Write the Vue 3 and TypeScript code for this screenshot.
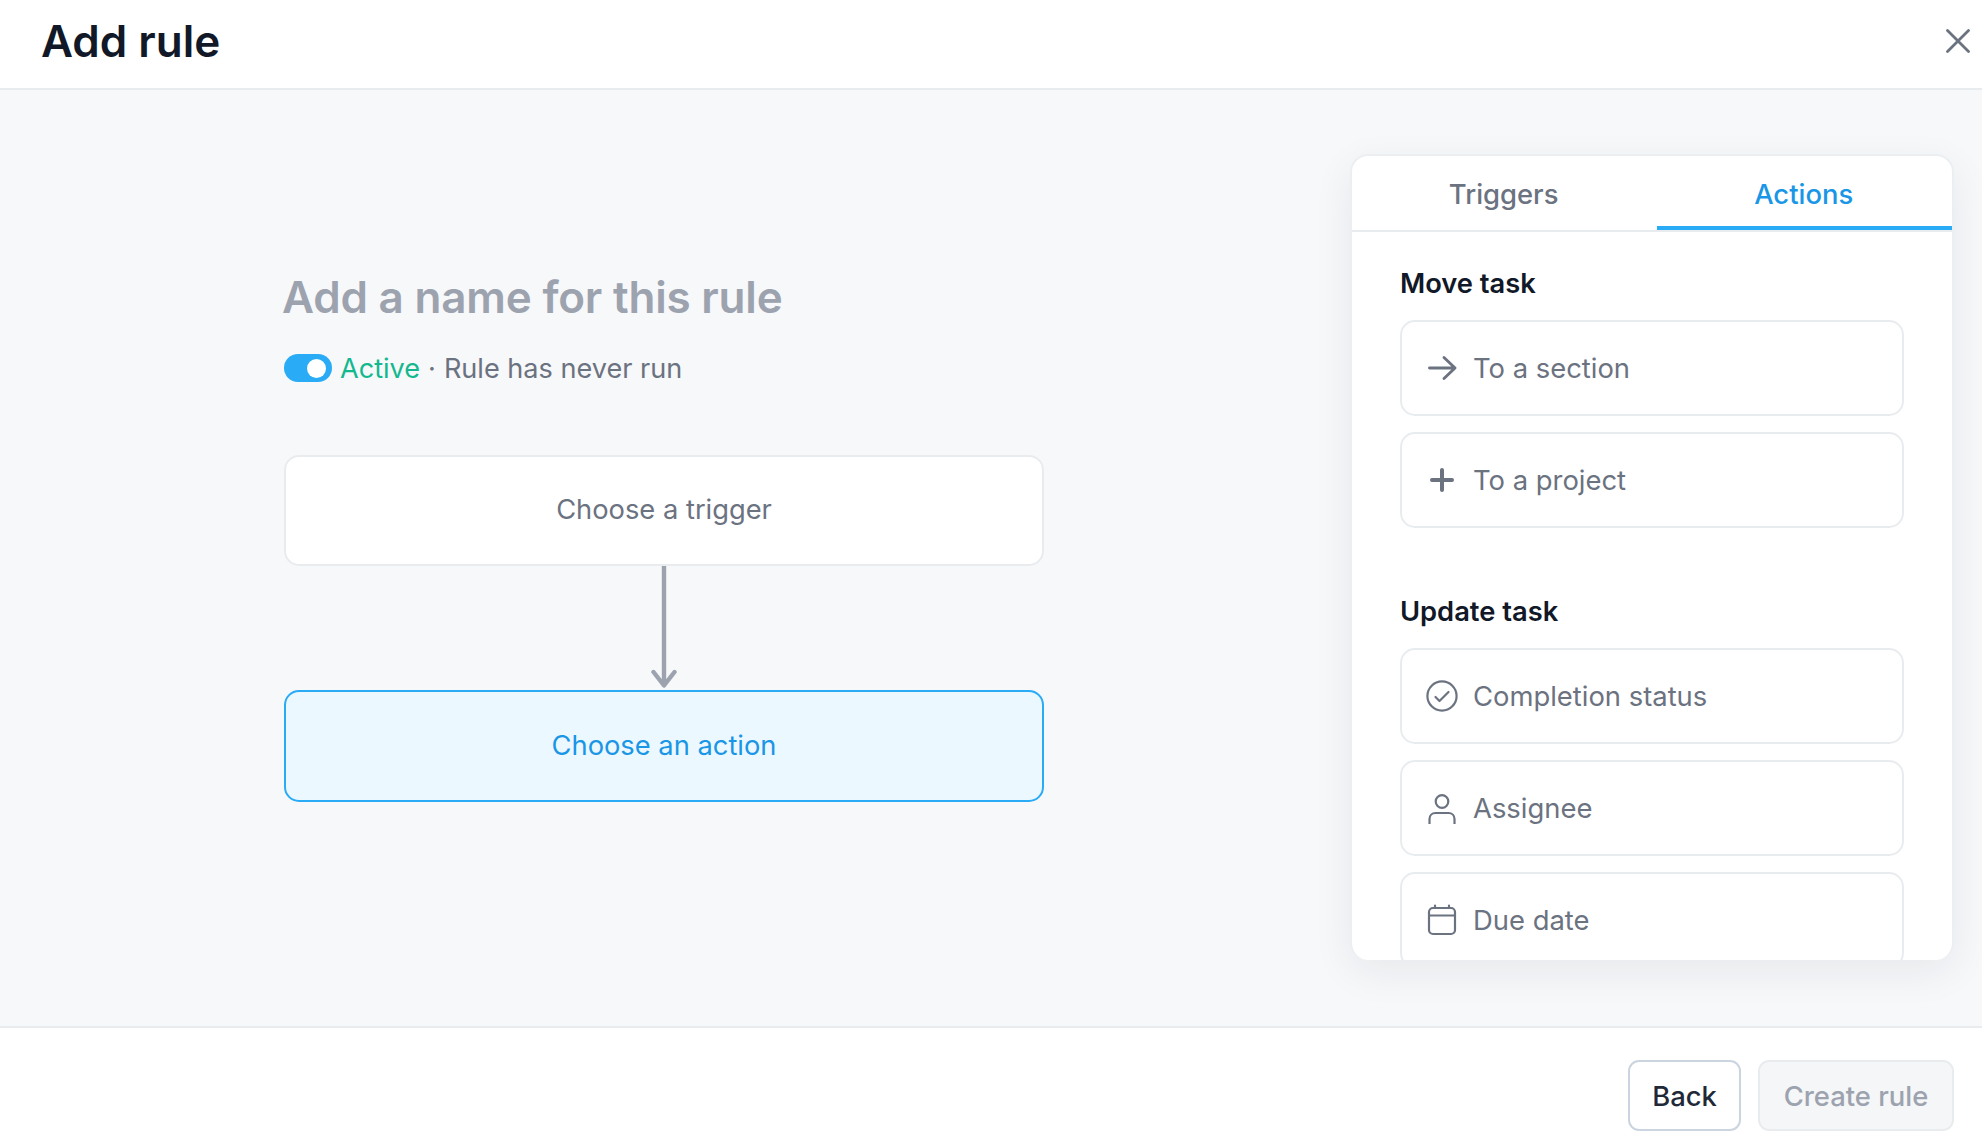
<script setup lang="ts">
const moveItems = [
  { label: 'To a section', icon: 'arrow' },
  { label: 'To a project', icon: 'plus' },
]
const updateItems = [
  { label: 'Completion status', icon: 'check' },
  { label: 'Assignee', icon: 'user' },
  { label: 'Due date', icon: 'calendar' },
]
const groups = [
  { title: 'Move task', items: moveItems },
  { title: 'Update task', items: updateItems },
]
</script>

<template>
  <div class="page">
    <header class="topbar">
      <h1 class="title">Add rule</h1>
      <button class="close" type="button" aria-label="Close">
        <svg width="24" height="24" viewBox="0 0 24 24" fill="none" stroke="#6b7280" stroke-width="2.8" stroke-linecap="round">
          <path d="M1.5 1.5 22.5 22.5M22.5 1.5 1.5 22.5" />
        </svg>
      </button>
    </header>

    <main class="body">
      <section class="canvas">
        <h2 class="rule-name">Add a name for this rule</h2>
        <div class="status">
          <span class="toggle"><span class="knob"></span></span>
          <span class="active">Active</span>
          <span class="dot">·</span>
          <span class="never">Rule has never run</span>
        </div>
        <div class="flow-card trigger">Choose a trigger</div>
        <svg class="connector" width="32" height="124" viewBox="0 0 32 124" fill="none" stroke="#9ca3af" stroke-width="4.4" stroke-linecap="round" stroke-linejoin="round">
          <path d="M16 0V119M5.500 106 16 119.500 26.500 106" />
        </svg>
        <div class="flow-card action">Choose an action</div>
      </section>

      <aside class="panel">
        <div class="tabs">
          <div class="tab">Triggers</div>
          <div class="tab selected">Actions</div>
        </div>
        <div class="panel-scroll">
          <div v-for="group in groups" :key="group.title" class="group">
            <h3 class="group-title">{{ group.title }}</h3>
            <div class="group-items">
              <div v-for="item in group.items" :key="item.label" class="item">
                <span class="item-icon">
                  <svg v-if="item.icon === 'arrow'" width="32" height="32" viewBox="0 0 32 32" fill="none" stroke="#6b7280" stroke-width="2.9" stroke-linecap="round" stroke-linejoin="round">
                    <path d="M3.500 16H29M18 5.500 29 16 18 26.500" />
                  </svg>
                  <svg v-else-if="item.icon === 'plus'" width="32" height="32" viewBox="0 0 32 32" fill="none" stroke="#6b7280" stroke-width="4" stroke-linecap="round">
                    <path d="M16 6V26M6 16H26" />
                  </svg>
                  <svg v-else-if="item.icon === 'check'" width="32" height="32" viewBox="0 0 32 32" fill="none" stroke="#6b7280" stroke-width="2.2" stroke-linecap="round" stroke-linejoin="round">
                    <circle cx="16" cy="16" r="14.600" />
                    <path d="M9.500 17 13.500 21 22.500 12" />
                  </svg>
                  <svg v-else-if="item.icon === 'user'" width="32" height="32" viewBox="0 0 32 32" fill="none" stroke="#6b7280" stroke-width="2.2" stroke-linejoin="round">
                    <circle cx="16" cy="9.500" r="6.300" />
                    <path d="M3.500 32V27C3.500 23.500 6 21 9.500 21H22.500C26 21 28.500 23.500 28.500 27V32" />
                  </svg>
                  <svg v-else width="32" height="32" viewBox="0 0 32 32" fill="none" stroke="#6b7280" stroke-width="2.2" stroke-linecap="round" stroke-linejoin="round">
                    <rect x="3" y="4" width="26" height="26" rx="4" />
                    <path d="M3 11.500H29M9 1.500V4M23 1.500V4" />
                  </svg>
                </span>
                <span class="item-label">{{ item.label }}</span>
              </div>
            </div>
          </div>
        </div>
      </aside>
    </main>

    <footer class="footer">
      <button class="btn back" type="button">Back</button>
      <button class="btn create" type="button" disabled>Create rule</button>
    </footer>
  </div>
</template>

<style>
html, body { margin: 0; background: #fff; }
</style>

<style scoped>
.page {
  width: 1982px;
  height: 1148px;
  display: flex;
  flex-direction: column;
  background: #fff;
  font-family: Inter, "Liberation Sans", sans-serif;
  overflow: hidden;
}
.topbar {
  height: 90px;
  box-sizing: border-box;
  flex: none;
  display: flex;
  align-items: center;
  justify-content: space-between;
  padding: 0 12px 6px 41px;
  border-bottom: 2px solid #e9ecef;
}
.title {
  margin: 0;
  font-size: 44px;
  font-weight: 600;
  color: #111827;
}
.close {
  width: 24px;
  height: 24px;
  padding: 0;
  border: 0;
  background: none;
  display: flex;
}
.body {
  flex: 1;
  min-height: 0;
  display: flex;
  justify-content: space-between;
  align-items: flex-start;
  background: #f7f8fa;
  padding: 64px 28px 0 284px;
}
.canvas {
  width: 760px;
  display: flex;
  flex-direction: column;
  padding-top: 112px;
}
.rule-name {
  margin: 0 0 0 -2px;
  height: 62px;
  line-height: 62px;
  font-size: 44px;
  font-weight: 600;
  letter-spacing: -0.2px;
  color: #9ca3af;
}
.status {
  margin-top: 23px;
  height: 34px;
  display: flex;
  align-items: center;
  font-size: 27.1px;
  color: #6b7280;
}
.toggle {
  width: 48px;
  height: 28px;
  border-radius: 14px;
  background: #29abf6;
  display: flex;
  align-items: center;
  justify-content: flex-end;
  padding-right: 6px;
  box-sizing: border-box;
  margin-right: 8px;
}
.knob {
  width: 19px;
  height: 19px;
  border-radius: 50%;
  background: #fff;
}
.active { color: #14b88f; }
.dot { margin: 0 8px; }
.flow-card {
  height: 111px;
  box-sizing: border-box;
  display: flex;
  align-items: center;
  justify-content: center;
  border-radius: 15px;
  font-size: 27.3px;
  padding-bottom: 2px;
}
.trigger {
  margin-top: 70px;
  background: #fff;
  border: 2px solid #e9ecef;
  color: #6b7280;
}
.connector {
  align-self: center;
  display: block;
  flex: none;
}
.action {
  height: 112px;
  background: #ecf8ff;
  border: 2px solid #29abf6;
  color: #1a96e6;
}
.panel {
  width: 604px;
  height: 806px;
  box-sizing: border-box;
  flex: none;
  background: #fff;
  border: 2px solid #eceff2;
  border-bottom: 0;
  border-radius: 18px;
  box-shadow: 0 12px 40px rgba(17, 24, 39, 0.07);
  overflow: hidden;
  display: flex;
  flex-direction: column;
}
.tabs {
  display: flex;
  height: 74px;
  flex: none;
  border-bottom: 2px solid #e9ecef;
}
.tab {
  flex: 1 1 auto;
  display: flex;
  align-items: center;
  justify-content: center;
  box-sizing: border-box;
  font-size: 27.4px;
  font-weight: 500;
  color: #6b7280;
  padding: 5px 2px 0 0;
  border-bottom: 4px solid transparent;
}
.tab.selected {
  color: #1a96e6;
  border-bottom-color: #29abf6;
}
.panel-scroll {
  flex: 1;
  min-height: 0;
  overflow: hidden;
  padding: 35px 48px 0;
}
.group + .group {
  margin-top: 67px;
}
.group-title {
  margin: 0 0 19px;
  height: 34px;
  line-height: 34px;
  font-size: 27.3px;
  font-weight: 600;
  color: #111827;
}
.group-items {
  display: flex;
  flex-direction: column;
  gap: 16px;
}
.item {
  height: 96px;
  flex: none;
  box-sizing: border-box;
  border: 2px solid #e9ecef;
  border-radius: 15px;
  display: flex;
  align-items: center;
  padding-left: 24px;
  background: #fff;
}
.item-icon {
  width: 32px;
  height: 32px;
  display: flex;
  flex: none;
  margin-right: 15px;
}
.item-label {
  font-size: 27.4px;
  color: #6b7280;
}
.footer {
  flex: none;
  height: 122px;
  box-sizing: border-box;
  border-top: 2px solid #e9ecef;
  display: flex;
  justify-content: flex-end;
  gap: 17px;
  padding: 32px 28px 0 0;
}
.btn {
  height: 71px;
  box-sizing: border-box;
  border-radius: 11px;
  font-family: inherit;
  font-size: 27.4px;
  font-weight: 500;
}
.back {
  width: 113px;
  background: #fff;
  border: 2px solid #cbd5e0;
  color: #1f2937;
}
.create {
  width: 196px;
  background: #f5f6f8;
  border: 2px solid #e9ecef;
  color: #9ca3af;
}
</style>
